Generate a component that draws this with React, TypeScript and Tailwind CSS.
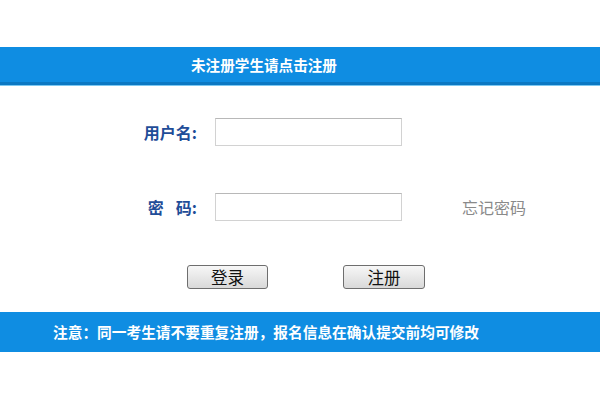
import React from "react";

export default function App() {
  const font = { fontFamily: '"Noto Sans CJK SC", "Noto Sans", sans-serif' };
  return (
    <div className="w-[600px] h-[400px] bg-white pt-[47px]" style={font}>
      <div className="h-[38px] bg-[#0f8de2] border-b-[3px] border-[#0b78c3] flex items-center pl-[191px]">
        <span className="text-white text-[14.6px] font-bold whitespace-nowrap">未注册学生请点击注册</span>
      </div>
      <div className="h-[1px] bg-[#7cc8f2]"></div>
      <div className="pt-[32px]">
        <div className="flex items-center pl-[120px]">
          <div className="w-[77px] text-right text-[16px] font-bold text-[#1f4d98] leading-none">用户名:</div>
          <div className="ml-[18px] w-[187px] h-[28px] border border-[#d2d2d2] border-t-[#b8b8b8] bg-white"></div>
        </div>
        <div className="flex items-center pl-[120px] mt-[47px]">
          <div className="w-[77px] flex justify-end items-center text-[16px] font-bold text-[#1f4d98] leading-none">
            <span>密</span>
            <span className="ml-[12px]">码:</span>
          </div>
          <div className="ml-[18px] w-[187px] h-[28px] border border-[#d2d2d2] border-t-[#b8b8b8] bg-white"></div>
          <div className="ml-[60px] text-[16px] text-[#8a8a8a] leading-none">忘记密码</div>
        </div>
        <div className="flex pl-[187px] mt-[44px] gap-[75px]">
          <div className="w-[81px] h-[24px] rounded-[3px] border border-[#6e6e6e] bg-gradient-to-b from-[#f7f7f7] to-[#d9d9d9] flex items-center justify-center text-[16.5px] text-[#111] leading-none">登录</div>
          <div className="w-[82px] h-[24px] rounded-[3px] border border-[#6e6e6e] bg-gradient-to-b from-[#f7f7f7] to-[#d9d9d9] flex items-center justify-center text-[16.5px] text-[#111] leading-none">注册</div>
        </div>
      </div>
      <div className="mt-[23px] h-[40px] bg-[#0f8de2] flex items-center pl-[53px]">
        <span className="text-white text-[14.7px] font-bold whitespace-nowrap">注意：同一考生请不要重复注册，报名信息在确认提交前均可修改</span>
      </div>
    </div>
  );
}
